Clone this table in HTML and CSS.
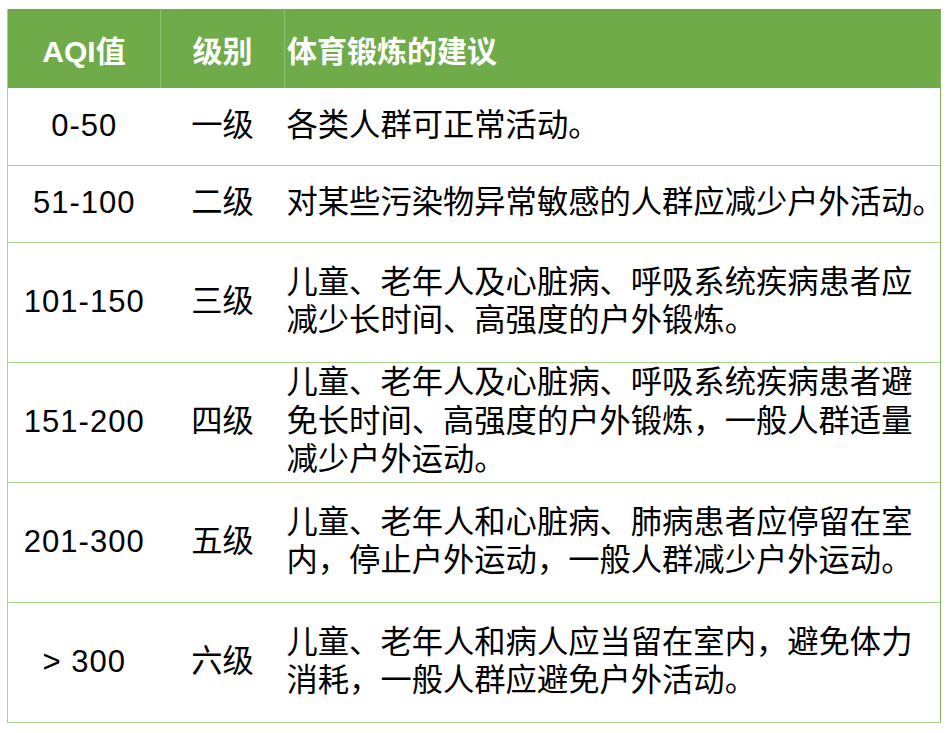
FILE: index.html
```html
<!DOCTYPE html>
<html lang="zh-CN">
<head>
<meta charset="utf-8">
<title>AQI</title>
<link rel="stylesheet" href="styles.css">
</head>
<body>
<table class="aqi">
  <colgroup>
    <col class="c1"><col class="c2"><col class="c3">
  </colgroup>
  <thead>
    <tr class="head">
      <th class="num">AQI值</th>
      <th class="lvl">级别</th>
      <th class="txt">体育锻炼的建议</th>
    </tr>
  </thead>
  <tbody>
    <tr class="short">
      <td class="num">0-50</td>
      <td class="lvl">一级</td>
      <td class="txt">各类人群可正常活动。</td>
    </tr>
    <tr class="short">
      <td class="num">51-100</td>
      <td class="lvl">二级</td>
      <td class="txt">对某些污染物异常敏感的人群应减少户外活动。</td>
    </tr>
    <tr class="tall">
      <td class="num">101-150</td>
      <td class="lvl">三级</td>
      <td class="txt">儿童、老年人及心脏病、呼吸系统疾病患者应<br>减少长时间、高强度的户外锻炼。</td>
    </tr>
    <tr class="tall">
      <td class="num">151-200</td>
      <td class="lvl">四级</td>
      <td class="txt">儿童、老年人及心脏病、呼吸系统疾病患者避<br>免长时间、高强度的户外锻炼，一般人群适量<br>减少户外运动。</td>
    </tr>
    <tr class="tall">
      <td class="num">201-300</td>
      <td class="lvl">五级</td>
      <td class="txt">儿童、老年人和心脏病、肺病患者应停留在室<br>内，停止户外运动，一般人群减少户外运动。</td>
    </tr>
    <tr class="tall">
      <td class="num">&gt; 300</td>
      <td class="lvl">六级</td>
      <td class="txt">儿童、老年人和病人应当留在室内，避免体力<br>消耗，一般人群应避免户外活动。</td>
    </tr>
  </tbody>
</table>
</body>
</html>
```
FILE: styles.css
```css
html, body {
  margin: 0;
  padding: 0;
  background: #ffffff;
}

body {
  padding: 9px 0 0 7px;
  font-family: "Liberation Sans", "Noto Sans CJK SC", sans-serif;
  color: #000;
}

.aqi {
  border-collapse: collapse;
  table-layout: fixed;
  width: 933px;
  border-left: 1px solid #a9d18e;
  border-right: 1px solid #7db05a;
}

.c1 { width: 153px; }
.c2 { width: 124px; }
.c3 { width: 656px; }

.head {
  height: 79px;
  background: #70ab4a;
}

.head th {
  color: #ffffff;
  font-size: 30px;
  font-weight: bold;
  padding: 0;
  vertical-align: middle;
  border-left: 1px solid #8ec36d;
}

.head th:first-child {
  border-left: none;
}

td {
  padding: 0;
  font-size: 31.3px;
  line-height: 38.5px;
  vertical-align: middle;
  border-bottom: 1px solid #a9d18e;
  white-space: nowrap;
}

.short { height: 77px; }
.tall { height: 120px; }

.num { text-align: center; }
td.num { font-size: 31px; letter-spacing: 1px; }
.lvl { text-align: center; }
th.txt, td.txt { text-align: left; padding-left: 2px; }
```
